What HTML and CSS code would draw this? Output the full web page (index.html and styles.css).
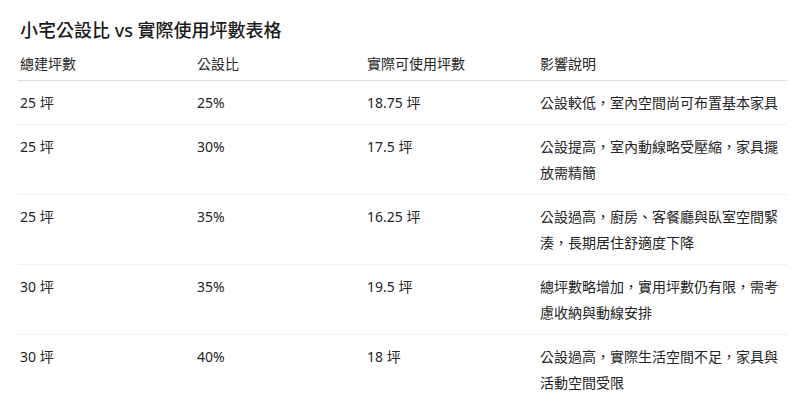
FILE: index.html
```html
<!DOCTYPE html>
<html lang="zh-Hant">
<head>
<meta charset="utf-8">
<link rel="stylesheet" href="styles.css">
</head>
<body>
<div class="page">
  <h3 class="title">小宅公設比 vs 實際使用坪數表格</h3>
  <table class="ratio-table">
    <colgroup>
      <col class="c1"><col class="c2"><col class="c3"><col class="c4">
    </colgroup>
    <thead>
      <tr><th>總建坪數</th><th>公設比</th><th>實際可使用坪數</th><th>影響說明</th></tr>
    </thead>
    <tbody>
      <tr><td>25 坪</td><td>25%</td><td>18.75 坪</td><td>公設較低，室內空間尚可布置基本家具</td></tr>
      <tr><td>25 坪</td><td>30%</td><td>17.5 坪</td><td>公設提高，室內動線略受壓縮，家具擺放需精簡</td></tr>
      <tr><td>25 坪</td><td>35%</td><td>16.25 坪</td><td>公設過高，廚房、客餐廳與臥室空間緊湊，長期居住舒適度下降</td></tr>
      <tr><td>30 坪</td><td>35%</td><td>19.5 坪</td><td>總坪數略增加，實用坪數仍有限，需考慮收納與動線安排</td></tr>
      <tr class="last"><td>30 坪</td><td>40%</td><td>18 坪</td><td>公設過高，實際生活空間不足，家具與活動空間受限</td></tr>
    </tbody>
  </table>
</div>
</body>
</html>
```
FILE: styles.css
```css
html, body {
  margin: 0;
  padding: 0;
  background: #ffffff;
}
body {
  font-family: "Noto Sans", "Noto Sans CJK TC", sans-serif;
  color: #242424;
}
.page {
  padding: 17px 25px 0 18px;
}
.title {
  margin: 0 0 0 2px;
  font-size: 18px;
  line-height: 26px;
  font-weight: 500;
  color: #1b1b1b;
}
.ratio-table {
  width: 769px;
  border-collapse: collapse;
  table-layout: fixed;
  font-size: 14px;
  line-height: 26px;
  margin-top: 8px;
}
.c1 { width: 177px; }
.c2 { width: 170px; }
.c3 { width: 173px; }
.c4 { width: 249px; }
.ratio-table th {
  text-align: left;
  font-weight: 400;
  padding: 0 2px 3px;
  border-bottom: 1px solid #dcdcdc;
  vertical-align: top;
}
.ratio-table td {
  padding: 9px 2px 8px;
  border-bottom: 1px solid #efefef;
  vertical-align: top;
}
.ratio-table tr.last td {
  border-bottom: none;
}
```
